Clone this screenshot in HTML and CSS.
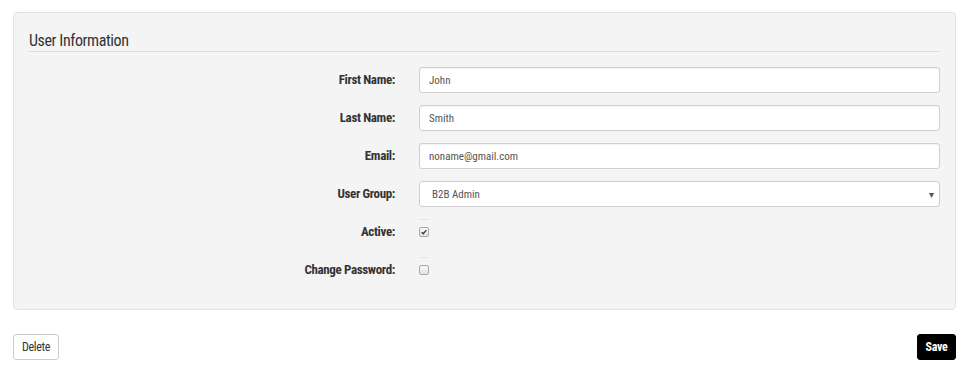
FILE: index.html
```html
<!DOCTYPE html>
<html>
<head>
<meta charset="utf-8">
<link rel="stylesheet" href="styles.css">
</head>
<body>
<div class="page">
  <div class="panel">
    <h2 class="panel-title">User Information</h2>
    <div class="form">
      <label class="lbl" for="fn">First Name:</label>
      <div class="field"><input class="ctl" id="fn" type="text" value="John"></div>

      <label class="lbl" for="ln">Last Name:</label>
      <div class="field"><input class="ctl" id="ln" type="text" value="Smith"></div>

      <label class="lbl" for="em">Email:</label>
      <div class="field"><input class="ctl" id="em" type="text" value="noname@gmail.com"></div>

      <label class="lbl" for="ug">User Group:</label>
      <div class="field">
        <div class="select">
          <span class="select-text">B2B Admin</span>
          <span class="select-arrow">&#9662;</span>
        </div>
      </div>

      <label class="lbl" for="ac">Active:</label>
      <div class="field check-field"><span class="check-line"></span><input class="chk" id="ac" type="checkbox" checked></div>

      <label class="lbl" for="cp">Change Password:</label>
      <div class="field check-field"><span class="check-line"></span><input class="chk" id="cp" type="checkbox"></div>
    </div>
  </div>
  <div class="actions">
    <button class="btn btn-default">Delete</button>
    <button class="btn btn-dark">Save</button>
  </div>
</div>
</body>
</html>
```

FILE: styles.css
```css
* { box-sizing: border-box; }
html, body { margin: 0; padding: 0; background: #fff; }
body {
  font-family: "Roboto Condensed", "Roboto", sans-serif;
  color: #333;
}
.page {
  padding: 12px 18px 0 13px;
}
.panel {
  background: #f4f4f4;
  border: 1px solid #e3e3e3;
  border-radius: 4px;
  padding: 0 15px 26px 15px;
}
.panel-title {
  margin: 0;
  padding: 17px 0 0 0;
  font-size: 16px;
  line-height: 21px;
  font-weight: normal;
  letter-spacing: -0.4px;
  color: #333;
  border-bottom: 1px solid #dedede;
}
.form {
  display: grid;
  grid-template-columns: 366px 1fr;
  column-gap: 24px;
  row-gap: 12px;
  margin-top: 15px;
}
.lbl {
  text-align: right;
  font-weight: bold;
  font-size: 13px;
  line-height: 26px;
  letter-spacing: -0.35px;
  color: #333;
}
.field {
  height: 26px;
}
.ctl {
  display: block;
  width: 100%;
  height: 26px;
  margin: 0;
  padding: 0 9px;
  border: 1px solid #cfcfcf;
  border-radius: 3px;
  background: #fff;
  font-family: inherit;
  font-size: 11px;
  color: #555;
  box-shadow: inset 0 1px 1px rgba(0,0,0,0.05);
  outline: none;
}
.select {
  display: flex;
  align-items: center;
  justify-content: space-between;
  height: 26px;
  padding: 0 5px 0 12px;
  border: 1px solid #cfcfcf;
  border-radius: 3px;
  background: #fff;
  font-size: 11px;
  color: #555;
}
.select-arrow {
  font-size: 10px;
  color: #555;
}
.check-field {
  position: relative;
  display: flex;
  align-items: center;
}
.check-line {
  position: absolute;
  left: 0;
  top: 0;
  width: 10px;
  border-top: 1px solid #e6e6e6;
}
.chk {
  appearance: none;
  -webkit-appearance: none;
  width: 10px;
  height: 10px;
  margin: 0 0 1px 0;
  border: 1px solid #a9a9a9;
  border-radius: 2px;
  background: linear-gradient(#f7f7f7, #e4e4e4);
}
.chk:checked {
  background: url("data:image/svg+xml;utf8,<svg xmlns='http://www.w3.org/2000/svg' viewBox='0 0 10 10'><path d='M2 5.2 L4 7.2 L8 2.6' fill='none' stroke='%23333' stroke-width='1.6'/></svg>") center/8px 8px no-repeat, linear-gradient(#f7f7f7, #e4e4e4);
}
.actions {
  display: flex;
  justify-content: space-between;
  margin-top: 24px;
}
.btn {
  height: 26px;
  font-family: inherit;
  font-size: 12px;
  letter-spacing: -0.3px;
  border-radius: 3px;
  padding: 0;
  cursor: pointer;
}
.btn-default {
  width: 46px;
  background: #fff;
  border: 1px solid #cccccc;
  color: #333;
}
.btn-dark {
  width: 39px;
  background: #000;
  border: 1px solid #000;
  color: #fff;
  font-weight: bold;
}
```
